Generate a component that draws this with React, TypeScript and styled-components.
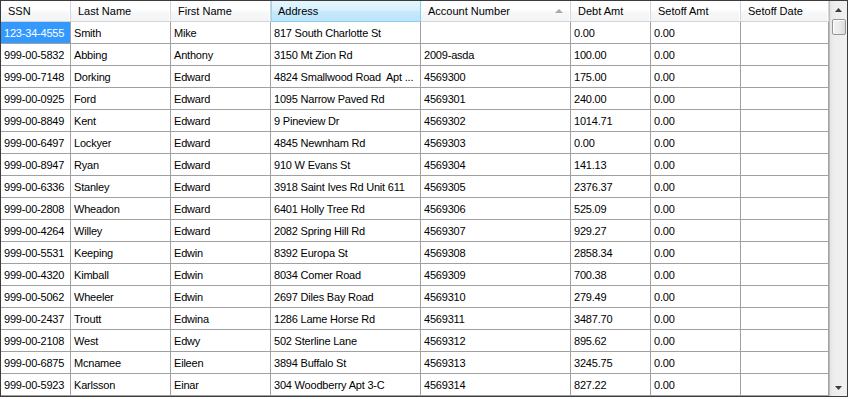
import React from "react"
import styled, { createGlobalStyle } from "styled-components"

const GlobalStyle = createGlobalStyle`
  html, body {
    margin: 0;
    padding: 0;
    background: #ffffff;
  }
  body {
    font-family: "Liberation Sans", Arial, sans-serif;
  }
`

type Column = { key: string; title: string; width: number; sorted?: boolean; hover?: boolean }

const columns: Column[] = [
  { key: "ssn", title: "SSN", width: 70 },
  { key: "last", title: "Last Name", width: 100 },
  { key: "first", title: "First Name", width: 100 },
  { key: "address", title: "Address", width: 150, hover: true },
  { key: "account", title: "Account Number", width: 150, sorted: true },
  { key: "debt", title: "Debt Amt", width: 80 },
  { key: "setoff", title: "Setoff Amt", width: 90 },
  { key: "date", title: "Setoff Date", width: 88 },
]

type Row = [string, string, string, string, string, string]

const rows: Row[] = [
  ["123-34-4555", "Smith", "Mike", "817 South Charlotte St", "", "0.00"],
  ["999-00-5832", "Abbing", "Anthony", "3150 Mt Zion Rd", "2009-asda", "100.00"],
  ["999-00-7148", "Dorking", "Edward", "4824 Smallwood Road  Apt ...", "4569300", "175.00"],
  ["999-00-0925", "Ford", "Edward", "1095 Narrow Paved Rd", "4569301", "240.00"],
  ["999-00-8849", "Kent", "Edward", "9 Pineview Dr", "4569302", "1014.71"],
  ["999-00-6497", "Lockyer", "Edward", "4845 Newnham Rd", "4569303", "0.00"],
  ["999-00-8947", "Ryan", "Edward", "910 W Evans St", "4569304", "141.13"],
  ["999-00-6336", "Stanley", "Edward", "3918 Saint Ives Rd Unit 611", "4569305", "2376.37"],
  ["999-00-2808", "Wheadon", "Edward", "6401 Holly Tree Rd", "4569306", "525.09"],
  ["999-00-4264", "Willey", "Edward", "2082 Spring Hill Rd", "4569307", "929.27"],
  ["999-00-5531", "Keeping", "Edwin", "8392 Europa St", "4569308", "2858.34"],
  ["999-00-4320", "Kimball", "Edwin", "8034 Comer Road", "4569309", "700.38"],
  ["999-00-5062", "Wheeler", "Edwin", "2697 Diles Bay Road", "4569310", "279.49"],
  ["999-00-2437", "Troutt", "Edwina", "1286 Lame Horse Rd", "4569311", "3487.70"],
  ["999-00-2108", "West", "Edwy", "502 Sterline Lane", "4569312", "895.62"],
  ["999-00-6875", "Mcnamee", "Eileen", "3894 Buffalo St", "4569313", "3245.75"],
  ["999-00-5923", "Karlsson", "Einar", "304 Woodberry Apt 3-C", "4569314", "827.22"],
]

const template = columns.map((c) => `${c.width}px`).join(" ")

const Frame = styled.div`
  box-sizing: border-box;
  width: 848px;
  height: 397px;
  border: 1px solid #3c3c3c;
  display: flex;
  background: #ffffff;
  overflow: hidden;
  font-size: 11px;
  color: #000000;
`

const GridArea = styled.div`
  flex: 1;
  display: flex;
  flex-direction: column;
  min-width: 0;
`

const HeaderRow = styled.div`
  display: grid;
  grid-template-columns: ${template};
  height: 21px;
`

const HeaderCell = styled.div<{ $hover?: boolean }>`
  box-sizing: border-box;
  display: flex;
  align-items: center;
  justify-content: space-between;
  padding: 0 7px 1px 7px;
  height: 21px;
  white-space: nowrap;
  border-right: 1px solid ${(p) => (p.$hover ? "#8ccdeb" : "#d5d5d5")};
  border-bottom: 1px solid ${(p) => (p.$hover ? "#8ccdeb" : "#d5d5d5")};
  background: ${(p) =>
    p.$hover
      ? "linear-gradient(to bottom, #e3f6fe 0%, #d9f1fd 45%, #c4e8fb 55%, #bde4fa 100%)"
      : "linear-gradient(to bottom, #ffffff 0%, #ffffff 45%, #f7f8f9 55%, #f2f3f5 100%)"};
  box-shadow: ${(p) => (p.$hover ? "inset 1px 0 0 #9fd6ef" : "inset -1px 0 0 #ffffff")};
`

const SortGlyph = styled.span`
  width: 0;
  height: 0;
  border-left: 4px solid transparent;
  border-right: 4px solid transparent;
  border-bottom: 4px solid #a7a9ab;
  margin-top: 1px;
`

const DataRow = styled.div`
  display: grid;
  grid-template-columns: ${template};
  height: 22px;
`

const Cell = styled.div<{ $selected?: boolean }>`
  box-sizing: border-box;
  height: 22px;
  line-height: 22px;
  padding-left: 3px;
  letter-spacing: -0.2px;
  white-space: pre;
  overflow: hidden;
  border-right: 1px solid #a0a0a0;
  border-bottom: 1px solid #a0a0a0;
  background: ${(p) => (p.$selected ? "#3399ff" : "#ffffff")};
  color: ${(p) => (p.$selected ? "#ffffff" : "#000000")};
`

const ScrollBar = styled.div`
  width: 18px;
  display: flex;
  flex-direction: column;
  align-items: center;
  background: linear-gradient(to right, #e3e3e3 0%, #ededed 20%, #f1f1f1 100%);
  border-left: 1px solid #bdbdbd;
  box-sizing: border-box;
`

const ArrowButton = styled.div`
  height: 17px;
  width: 100%;
  display: flex;
  align-items: center;
  justify-content: center;
`

const Thumb = styled.div`
  box-sizing: border-box;
  width: 14px;
  height: 16px;
  margin-top: 1px;
  border: 1px solid #979797;
  border-radius: 2px;
  background: linear-gradient(to right, #f3f3f3 0%, #ebebeb 50%, #d9d9d9 100%);
  box-shadow: inset 1px 1px 0 #ffffff;
`

const Spacer = styled.div`
  flex: 1;
`

const Arrow = ({ down }: { down?: boolean }) => (
  <svg width="7" height="4" viewBox="0 0 7 4">
    <path d={down ? "M0 0H7L3.5 4Z" : "M3.5 0L7 4H0Z"} fill="#3d3d3d" />
  </svg>
)

export default function App() {
  return (
    <>
      <GlobalStyle />
      <Frame>
        <GridArea>
          <HeaderRow>
            {columns.map((c) => (
              <HeaderCell key={c.key} $hover={c.hover}>
                <span>{c.title}</span>
                {c.sorted && <SortGlyph />}
              </HeaderCell>
            ))}
          </HeaderRow>
          {rows.map((r, i) => (
            <DataRow key={r[0]}>
              {r.map((v, j) => (
                <Cell key={j} $selected={i === 0 && j === 0}>
                  {v}
                </Cell>
              ))}
              <Cell>0.00</Cell>
              <Cell />
            </DataRow>
          ))}
        </GridArea>
        <ScrollBar>
          <ArrowButton>
            <Arrow />
          </ArrowButton>
          <Thumb />
          <Spacer />
          <ArrowButton>
            <Arrow down />
          </ArrowButton>
        </ScrollBar>
      </Frame>
    </>
  )
}
